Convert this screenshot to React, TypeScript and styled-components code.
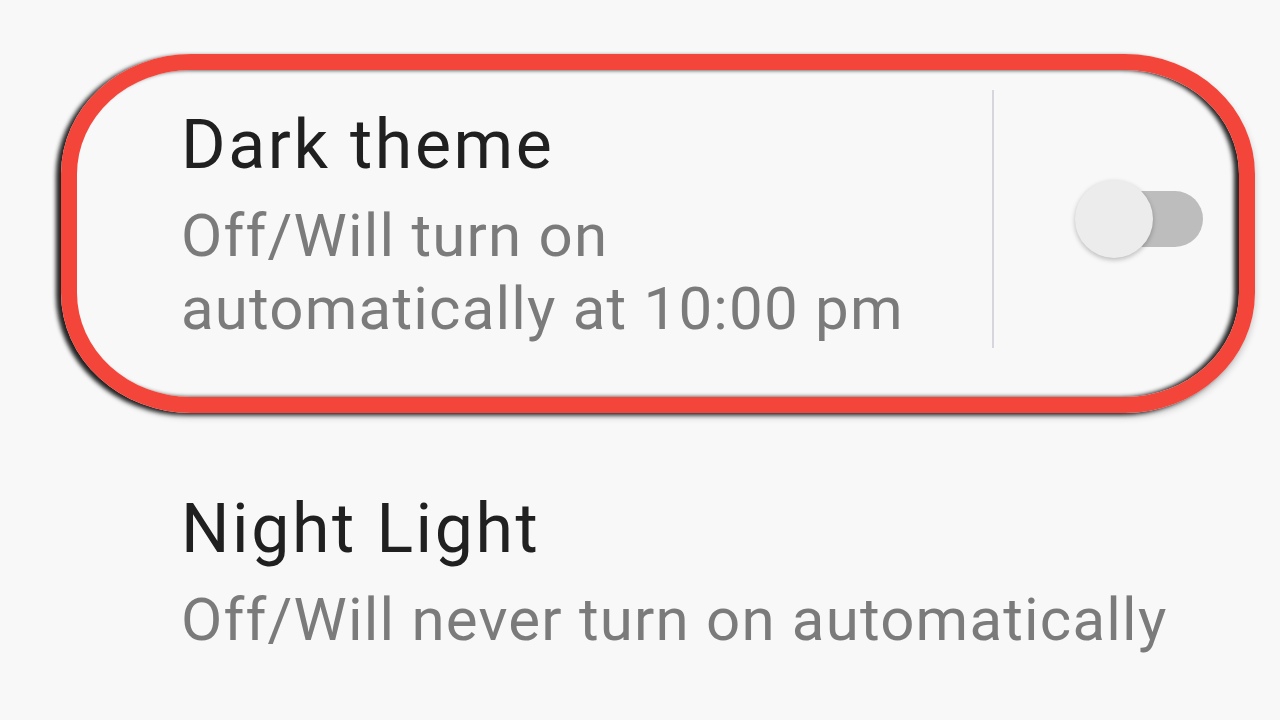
import React from "react";
import styled, { createGlobalStyle } from "styled-components";

const Global = createGlobalStyle`
  html, body {
    margin: 0;
    padding: 0;
    background: #f8f8f8;
    width: 1280px;
    height: 720px;
    overflow: hidden;
  }
  body {
    font-family: Roboto, "Noto Sans", "Liberation Sans", sans-serif;
  }
`;

const Page = styled.div`
  display: flex;
  flex-direction: column;
  width: 1280px;
  height: 720px;
  background: #f8f8f8;
`;

const Highlight = styled.div`
  margin: 54px 0 0 61px;
  width: 1194px;
  box-sizing: border-box;
  border: 16px solid #f4453b;
  border-radius: 130px / 120px;
  padding: 20px 0 49px 104px;
  box-shadow: -5px 2px 4px rgba(0, 0, 0, 0.85), 0 4px 7px rgba(0, 0, 0, 0.2),
    inset -5px 0 4px rgba(0, 0, 0, 0.85);
  display: flex;
  align-items: stretch;
`;

const Item = styled.div<{ $indent?: number; $top?: number }>`
  display: flex;
  flex-direction: column;
  padding-left: ${(p) => p.$indent ?? 0}px;
  margin-top: ${(p) => p.$top ?? 0}px;
`;

const TextBlock = styled.div`
  width: 811px;
  padding: 15px 0 3px 0;
  display: flex;
  flex-direction: column;
`;

const Title = styled.div`
  font-size: 68px;
  line-height: 80px;
  letter-spacing: 2.6px;
  color: #202020;
  margin-bottom: 14px;
  white-space: nowrap;
`;

const Summary = styled.div`
  font-size: 60px;
  line-height: 73px;
  letter-spacing: 1.2px;
  color: #7b7b7b;
  white-space: nowrap;
`;

const Divider = styled.div`
  width: 2px;
  background: #d6d6dc;
`;

const Switch = styled.div`
  position: relative;
  align-self: center;
  width: 128px;
  height: 80px;
  margin: 0 36px 0 81px;
`;

const Track = styled.div`
  position: absolute;
  left: 15px;
  top: 12px;
  width: 113px;
  height: 56px;
  border-radius: 28px;
  background: #bdbdbd;
`;

const Thumb = styled.div`
  position: absolute;
  left: 0;
  top: 1px;
  width: 78px;
  height: 78px;
  border-radius: 50%;
  background: #ececec;
  box-shadow: 0 2px 5px rgba(0, 0, 0, 0.25);
`;

export default function App() {
  return (
    <>
      <Global />
      <Page>
        <Highlight>
          <TextBlock>
            <Title>Dark theme</Title>
            <Summary>
              Off/Will turn on
              <br />
              automatically at 10:00 pm
            </Summary>
          </TextBlock>
          <Divider />
          <Switch>
            <Track />
            <Thumb />
          </Switch>
        </Highlight>
        <Item $indent={181} $top={76}>
          <Title>Night Light</Title>
          <Summary>Off/Will never turn on automatically</Summary>
        </Item>
      </Page>
    </>
  );
}
